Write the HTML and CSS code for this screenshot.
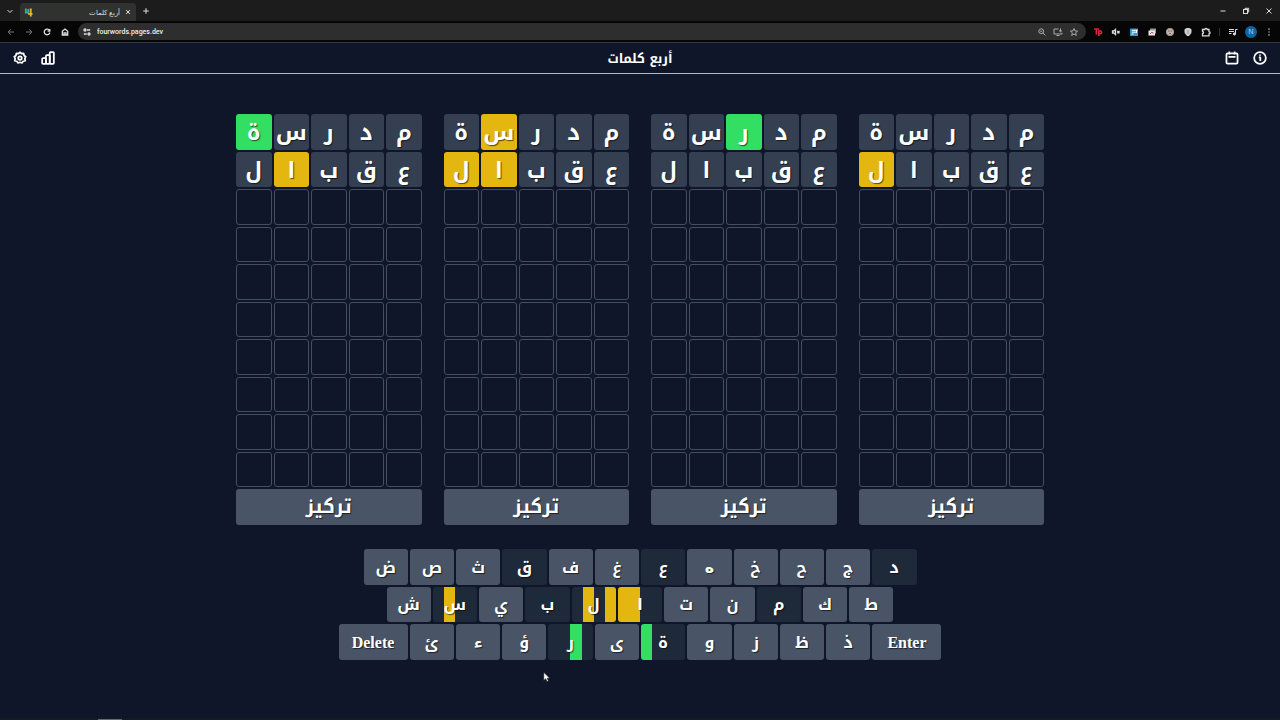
FILE: index.html
```html
<!DOCTYPE html>
<html lang="ar">
<head>
    <meta charset="UTF-8">
    <meta name="viewport" content="width=device-width, initial-scale=1.0">
    <title>أربع كلمات</title>
    <link rel="stylesheet" href="styles.css">
</head>
<body>

    <div class="browser">
        <div class="tabs">
            <button class="ico tab-search" aria-label="Search tabs"><svg viewBox="0 0 12 12"><path d="M3.500 5l2.500 2.500L8.500 5"/></svg></button>
            <div class="tab">
                <svg class="favicon" viewBox="0 0 10 10"><path d="M2 .5v4.500h3" stroke="#3fae8a"/><path d="M4.800 1v4" stroke="#4b9fd0"/><path d="M7.500 .5v9" stroke="#e5b92a"/><path d="M4.500 6.500H9.500" stroke="#e5b92a"/></svg>
                <span class="tab-title" dir="rtl">أربع كلمات</span>
                <button class="ico tab-close" aria-label="Close tab"><svg viewBox="0 0 12 12"><path d="M4 4l4 4M8 4l-4 4"/></svg></button>
            </div>
            <button class="ico" aria-label="New tab"><svg viewBox="0 0 12 12"><path d="M6 3.200v5.600M3.200 6h5.600"/></svg></button>
            <div class="window-buttons">
                <button class="ico" aria-label="Minimize"><svg viewBox="0 0 12 12"><path d="M3.500 6h5"/></svg></button>
                <button class="ico" aria-label="Restore"><svg viewBox="0 0 12 12"><rect x="3.500" y="4.500" width="4" height="4"/><path d="M5 4.500V3.300h3.700V7H7.500"/></svg></button>
                <button class="ico" aria-label="Close"><svg viewBox="0 0 12 12"><path d="M3.500 3.500l5 5M8.500 3.500l-5 5"/></svg></button>
            </div>
        </div>
        <div class="toolbar">
            <button class="ico dim" aria-label="Back"><svg viewBox="0 0 12 12"><path d="M9 6H3.200M5.800 3.300L3.100 6l2.700 2.700"/></svg></button>
            <button class="ico dim" aria-label="Forward"><svg viewBox="0 0 12 12"><path d="M3 6h5.800M6.200 3.300L8.900 6 6.200 8.700"/></svg></button>
            <button class="ico bold" aria-label="Reload"><svg viewBox="0 0 12 12"><path d="M8.500 4.600A2.800 2.800 0 1 0 8.800 6.500M8.800 3v2.200H6.600"/></svg></button>
            <button class="ico bold" aria-label="Home"><svg viewBox="0 0 12 12"><path d="M3.300 5.200L6 3l2.700 2.200V9H3.300zM5 9V6.800h2V9"/></svg></button>
            <div class="address">
                <button class="ico bold" aria-label="Site information"><svg viewBox="0 0 12 12"><path d="M6 4h3.200M2.800 8h3"/><circle cx="4" cy="4" r="1"/><circle cx="8" cy="8" r="1"/></svg></button>
                <input class="url" type="text" aria-label="Address" value="fourwords.pages.dev">
                <button class="ico soft" aria-label="Zoom"><svg viewBox="0 0 12 12"><circle cx="5.200" cy="5.200" r="2.400"/><path d="M7 7l2.400 2.400M4.200 5.200h2"/></svg></button>
                <button class="ico soft" aria-label="Install"><svg viewBox="0 0 12 12"><path d="M6.500 3H2v5h8V6.800M4.500 9.500h3M8.500 2.500v3.200M7 4.500l1.500 1.400L10 4.500"/></svg></button>
                <button class="ico soft" aria-label="Bookmark"><svg viewBox="0 0 12 12"><path d="M6 2.500l1 2.400 2.600.2-2 1.700.7 2.600L6 8l-2.300 1.400.7-2.600-2-1.700 2.600-.2z"/></svg></button>
            </div>
            <div class="extensions">
                <button class="ico" aria-label="Theater"><svg viewBox="0 0 12 12"><path d="M2 3h5M4.400 3v5.500M6.800 10V5h1.400a1.400 1.400 0 0 1 0 2.800H6.700" stroke="#e0243f" stroke-width="1.600"/></svg></button>
                <button class="ico bold" aria-label="Mute"><svg viewBox="0 0 12 12"><path d="M2.500 5v2h1.300l1.700 1.600V3.400L3.800 5zM7.300 5l2.200 2.200M9.500 5L7.300 7.200"/></svg></button>
                <button class="ico" aria-label="Translate"><svg viewBox="0 0 12 12"><path d="M2 2.500h8v7.500h-8z" fill="#2b9bd0" stroke="none"/><path d="M4 4.300h5.500M4 6.200h4M3.500 8h2M8.500 4v3" stroke="#fff"/></svg></button>
                <button class="ico" aria-label="Gallery"><svg viewBox="0 0 12 12"><path d="M4 2.500h6v5h-6z" fill="#9b97a0" stroke="none"/><path d="M2.500 4.500h6.500v5h-6.500z" fill="#eee8ec" stroke="none"/><path d="M4 8l1.500-1.500L7.500 7" stroke="#a83e4f"/></svg></button>
                <button class="ico" aria-label="Cookies"><svg viewBox="0 0 12 12"><circle cx="6" cy="6" r="3.700" fill="#c4b5af" stroke="#9b908c"/><path d="M4 5h1.500M6.500 5h1.500M5 7.500h2" stroke="#75605a"/></svg></button>
                <button class="ico" aria-label="Shield"><svg viewBox="0 0 12 12"><path d="M6 2.300l3 1v2.500c0 2-1.300 3.200-3 4-1.700-.8-3-2-3-4V3.300z" fill="#ccc"/><path d="M6 4v4" stroke="#999"/></svg></button>
                <button class="ico bold" aria-label="Extensions"><svg viewBox="0 0 12 12"><path d="M2.500 3.500h2.300a1.200 1.200 0 0 1 2.400 0H9v2.200a1.100 1.100 0 0 1 0 2.200v1.900H2.500V7.500a1.100 1.100 0 0 0 0-2.200z"/></svg></button>
                <span class="divider"></span>
                <button class="ico" aria-label="Media"><svg viewBox="0 0 12 12"><path d="M2 3.500h5M2 5.500h5M2 7.500h2.500M8.500 8V3.500h2"/><circle cx="7.400" cy="8" r="1.100" fill="#ddd"/></svg></button>
                <button class="profile">N</button>
                <button class="ico" aria-label="Menu"><svg viewBox="0 0 12 12"><path d="M6 2.500v1.200M6 5.400v1.200M6 8.300v1.200" stroke-width="1.300"/></svg></button>
            </div>
        </div>
    </div>

    <header class="header">
        <div class="header-group">
            <button class="header-btn" aria-label="الإعدادات"><svg viewBox="0 0 24 24"><path d="M12 2.200l2.600 2.200 3.600-.3.700 3.500 2.900 2.200-1.500 3.200.7 3.600-3.500 1-2.200 2.900L12 19.300l-3.300 1.200-2.200-2.900-3.500-1 .7-3.600L2.200 9.800l2.900-2.200.7-3.500 3.600.3z"/><circle cx="12" cy="12" r="3"/></svg></button>
            <button class="header-btn" aria-label="الإحصائيات"><svg viewBox="0 0 24 24"><rect x="2" y="12" width="6.500" height="10" rx="1.500"/><rect x="8.500" y="7" width="6.500" height="15" rx="1.500"/><rect x="15" y="2" width="7" height="20" rx="1.500"/></svg></button>
        </div>
        <h1 class="title" dir="rtl">أربع كلمات</h1>
        <div class="header-group">
            <button class="header-btn" aria-label="الأرشيف"><svg viewBox="0 0 24 24"><rect x="2.500" y="4" width="19" height="17.500" rx="2"/><path d="M6 10h12M7.500 1v5M16.500 1v5"/></svg></button>
            <button class="header-btn" aria-label="مساعدة"><svg viewBox="0 0 24 24"><circle cx="12" cy="12" r="10"/><path d="M10 11H12.500v6M12 6.200v2"/></svg></button>
        </div>
    </header>

    <main class="game">
        <div class="boards" id="boards"></div>
        <div class="keyboard" id="keyboard"></div>
    </main>

    <div class="taskbar"><span class="taskbar-item"></span></div>

    <svg class="cursor" viewBox="0 0 12 16"><path d="M1 1v11l2.600-2.300 1.700 3.900 2-.9-1.700-3.700H9z" fill="#fff" stroke="#111" stroke-width=".8"/></svg>

    <script>
        const ROWS = 10;
        const guesses = ["مدرسة", "عقبال"];

        // g = right place, y = wrong place, - = not in the word
        const results = [
            ["----g", "---y-"],
            ["---y-", "---yy"],
            ["--g--", "-----"],
            ["-----", "----y"]
        ];

        const keyRows = [
            ["ض", "ص", "ث", "ق", "ف", "غ", "ع", "ه", "خ", "ح", "ج", "د"],
            ["ش", "س", "ي", "ب", "ل", "ا", "ت", "ن", "م", "ك", "ط"],
            ["Delete", "ئ", "ء", "ؤ", "ر", "ى", "ة", "و", "ز", "ظ", "ذ", "Enter"]
        ];

        const colors = { g: "#32df62", y: "#e3b710", "-": "transparent" };

        function drawBoards() {
            const boards = document.getElementById("boards");
            results.forEach(function (result) {
                const board = document.createElement("section");
                board.className = "board";
                board.dir = "rtl";
                for (let r = 0; r < ROWS; r++) {
                    for (let c = 0; c < 5; c++) {
                        const tile = document.createElement("div");
                        tile.className = "tile";
                        if (guesses[r]) {
                            tile.innerText = guesses[r][c];
                            tile.classList.add("filled");
                            if (result[r][c] === "g") tile.classList.add("correct");
                            if (result[r][c] === "y") tile.classList.add("present");
                        }
                        board.appendChild(tile);
                    }
                }
                const focus = document.createElement("button");
                focus.className = "focus-btn";
                focus.innerText = "تركيز";
                board.appendChild(focus);
                boards.appendChild(board);
            });
        }

        // best mark of a letter on one board
        function markOf(letter, result) {
            let mark = "-";
            guesses.forEach(function (word, r) {
                const c = word.indexOf(letter);
                if (c >= 0 && result[r][c] !== "-" && mark !== "g") mark = result[r][c];
            });
            return mark;
        }

        function drawKeyboard() {
            const keyboard = document.getElementById("keyboard");
            keyRows.forEach(function (keys, i) {
                const row = document.createElement("div");
                row.className = "key-row row-" + (i + 1);
                keys.forEach(function (letter) {
                    const key = document.createElement("button");
                    key.className = letter.length > 1 ? "key wide" : "key";
                    // the Kufi font has no round isolated heh
                    if (letter === "ه") key.classList.add("heh");
                    key.innerText = letter;
                    if (guesses.join("").includes(letter)) {
                        key.classList.add("used");
                        const stops = results.map(function (result, n) {
                            return colors[markOf(letter, result)] + " " + n * 25 + "% " + (n + 1) * 25 + "%";
                        });
                        key.style.backgroundImage = "linear-gradient(to right, " + stops.join(", ") + ")";
                    }
                    row.appendChild(key);
                });
                keyboard.appendChild(row);
            });
        }

        drawBoards();
        drawKeyboard();
    </script>
</body>
</html>
```
FILE: styles.css
```css
* {
    box-sizing: border-box;
}

body {
    margin: 0;
    min-height: 100vh;
    display: flex;
    flex-direction: column;
    background: #0f1629;
    color: #fff;
    font-family: "Noto Kufi Arabic", "Noto Sans Arabic", "DejaVu Sans", sans-serif;
}

button {
    border: none;
    padding: 0;
    background: none;
    color: inherit;
    font-family: inherit;
    cursor: pointer;
}

svg {
    display: block;
    fill: none;
    stroke: currentColor;
}

/* browser bar */
.browser {
    background: #060606;
    border-bottom: 1px solid #34383f;
    color: #ddd;
    font-family: "Open Sans", "DejaVu Sans", sans-serif;
}

.tabs {
    display: flex;
    align-items: center;
    height: 21px;
    padding: 0 4px;
    background: #1c1c1c;
}

.ico {
    width: 12px;
    height: 12px;
    flex: none;
}

.ico svg {
    width: 12px;
    height: 12px;
}

.dim { color: #777; }
.soft { color: #aaa; }
.bold { stroke-width: 1.3; }

.tab {
    display: flex;
    align-items: center;
    width: 116px;
    height: 18px;
    margin: 3px 4px 0 4px;
    padding: 0 2px 0 4px;
    border-radius: 4px 4px 0 0;
    background: #303230;
}

.favicon {
    width: 9px;
    height: 9px;
    stroke-width: 2;
}

.tab-title {
    flex: 1;
    margin-right: 2px;
    font-family: "Noto Sans", sans-serif;
    font-size: 7px;
}

.window-buttons {
    display: flex;
    gap: 11px;
    margin-left: auto;
    padding-right: 1px;
}

.toolbar {
    display: flex;
    align-items: center;
    gap: 6px;
    height: 21px;
    padding: 0 5px;
}

.address {
    display: flex;
    flex: 1;
    align-items: center;
    gap: 4px;
    height: 17px;
    margin-left: 1px;
    padding: 0 6px 0 3px;
    border-radius: 9px;
    background: #2e2e2e;
}

.url {
    flex: 1;
    min-width: 0;
    padding: 0;
    border: none;
    outline: none;
    background: none;
    color: #eee;
    font-family: Roboto, sans-serif;
    font-size: 7px;
    font-weight: 500;
}

.extensions {
    display: flex;
    align-items: center;
    gap: 6px;
}

.divider {
    width: 1px;
    height: 8px;
    margin: 0 1px;
    background: #333;
}

.profile {
    width: 12px;
    height: 12px;
    border-radius: 50%;
    background: #0c66a5;
    font-size: 7px;
    line-height: 12px;
}

/* page header */
.header {
    display: grid;
    grid-template-columns: 1fr auto 1fr;
    align-items: center;
    height: 31px;
    padding: 0 12px;
    border-bottom: 1px solid #b4b9c6;
}

.header-group {
    display: flex;
    gap: 12px;
}

.header-group:last-child {
    justify-content: flex-end;
}

.header-btn svg {
    width: 16px;
    height: 16px;
    padding: 1px;
    stroke-width: 3;
    stroke-linejoin: round;
    overflow: visible;
}

.title {
    margin: 0;
    padding-top: 2px;
    font-size: 13px;
    line-height: 20px;
}

/* boards */
.game {
    flex: 1;
    padding: 40px 16px 0;
}

.boards {
    display: grid;
    grid-template-columns: repeat(4, 1fr);
    gap: 22px;
    max-width: 808px;
    margin: 0 auto;
}

.board {
    display: grid;
    grid-template-columns: repeat(5, 1fr);
    grid-template-rows: repeat(11, 1fr);
    gap: 2px;
    height: 411px;
}

.tile {
    display: flex;
    align-items: center;
    justify-content: center;
    min-width: 0;
    min-height: 0;
    border: 1px solid #434e5e;
    border-radius: 3px;
    font-size: 22px;
    font-weight: bold;
    line-height: 30px;
    text-shadow: 1px 1px 1px rgba(0, 0, 0, 0.6);
}

.filled {
    padding-top: 3px;
    border: none;
    background: #344052;
}

.correct { background: #32df62; }
.present { background: #e3b710; }

.focus-btn {
    grid-column: 1 / -1;
    min-height: 0;
    border-radius: 3px;
    background: #495566;
    font-size: 19px;
    font-weight: bold;
    line-height: 30px;
    text-shadow: 1px 1px 1px rgba(0, 0, 0, 0.6);
}

/* keyboard */
.keyboard {
    display: grid;
    grid-template-rows: repeat(3, 1fr);
    justify-items: center;
    gap: 2px;
    height: 111px;
    margin-top: 24px;
}

.key-row {
    display: flex;
    gap: 2px;
    width: 100%;
    min-height: 0;
}

.row-1 { max-width: 553px; }
.row-2 { max-width: 507px; }
.row-3 { max-width: 603px; }

.key {
    flex: 1;
    min-width: 0;
    padding-top: 2px;
    border-radius: 3px;
    background-color: #495566;
    font-size: 16px;
    font-weight: bold;
    line-height: 24px;
    text-shadow: 1px 1px 1px rgba(0, 0, 0, 0.6);
}

.used { background-color: #1e293a; }

.heh { font-family: "DejaVu Sans", sans-serif; }

.wide {
    flex: 0 0 69px;
    font-family: "Liberation Serif", serif;
}

.taskbar {
    height: 2px;
    padding-left: 98px;
    background: #101b24;
}

.taskbar-item {
    display: block;
    width: 24px;
    height: 2px;
    border-bottom: 1px solid #6b6670;
}

.cursor {
    position: absolute;
    left: 543px;
    top: 671px;
    width: 9px;
    height: 13px;
}
```
